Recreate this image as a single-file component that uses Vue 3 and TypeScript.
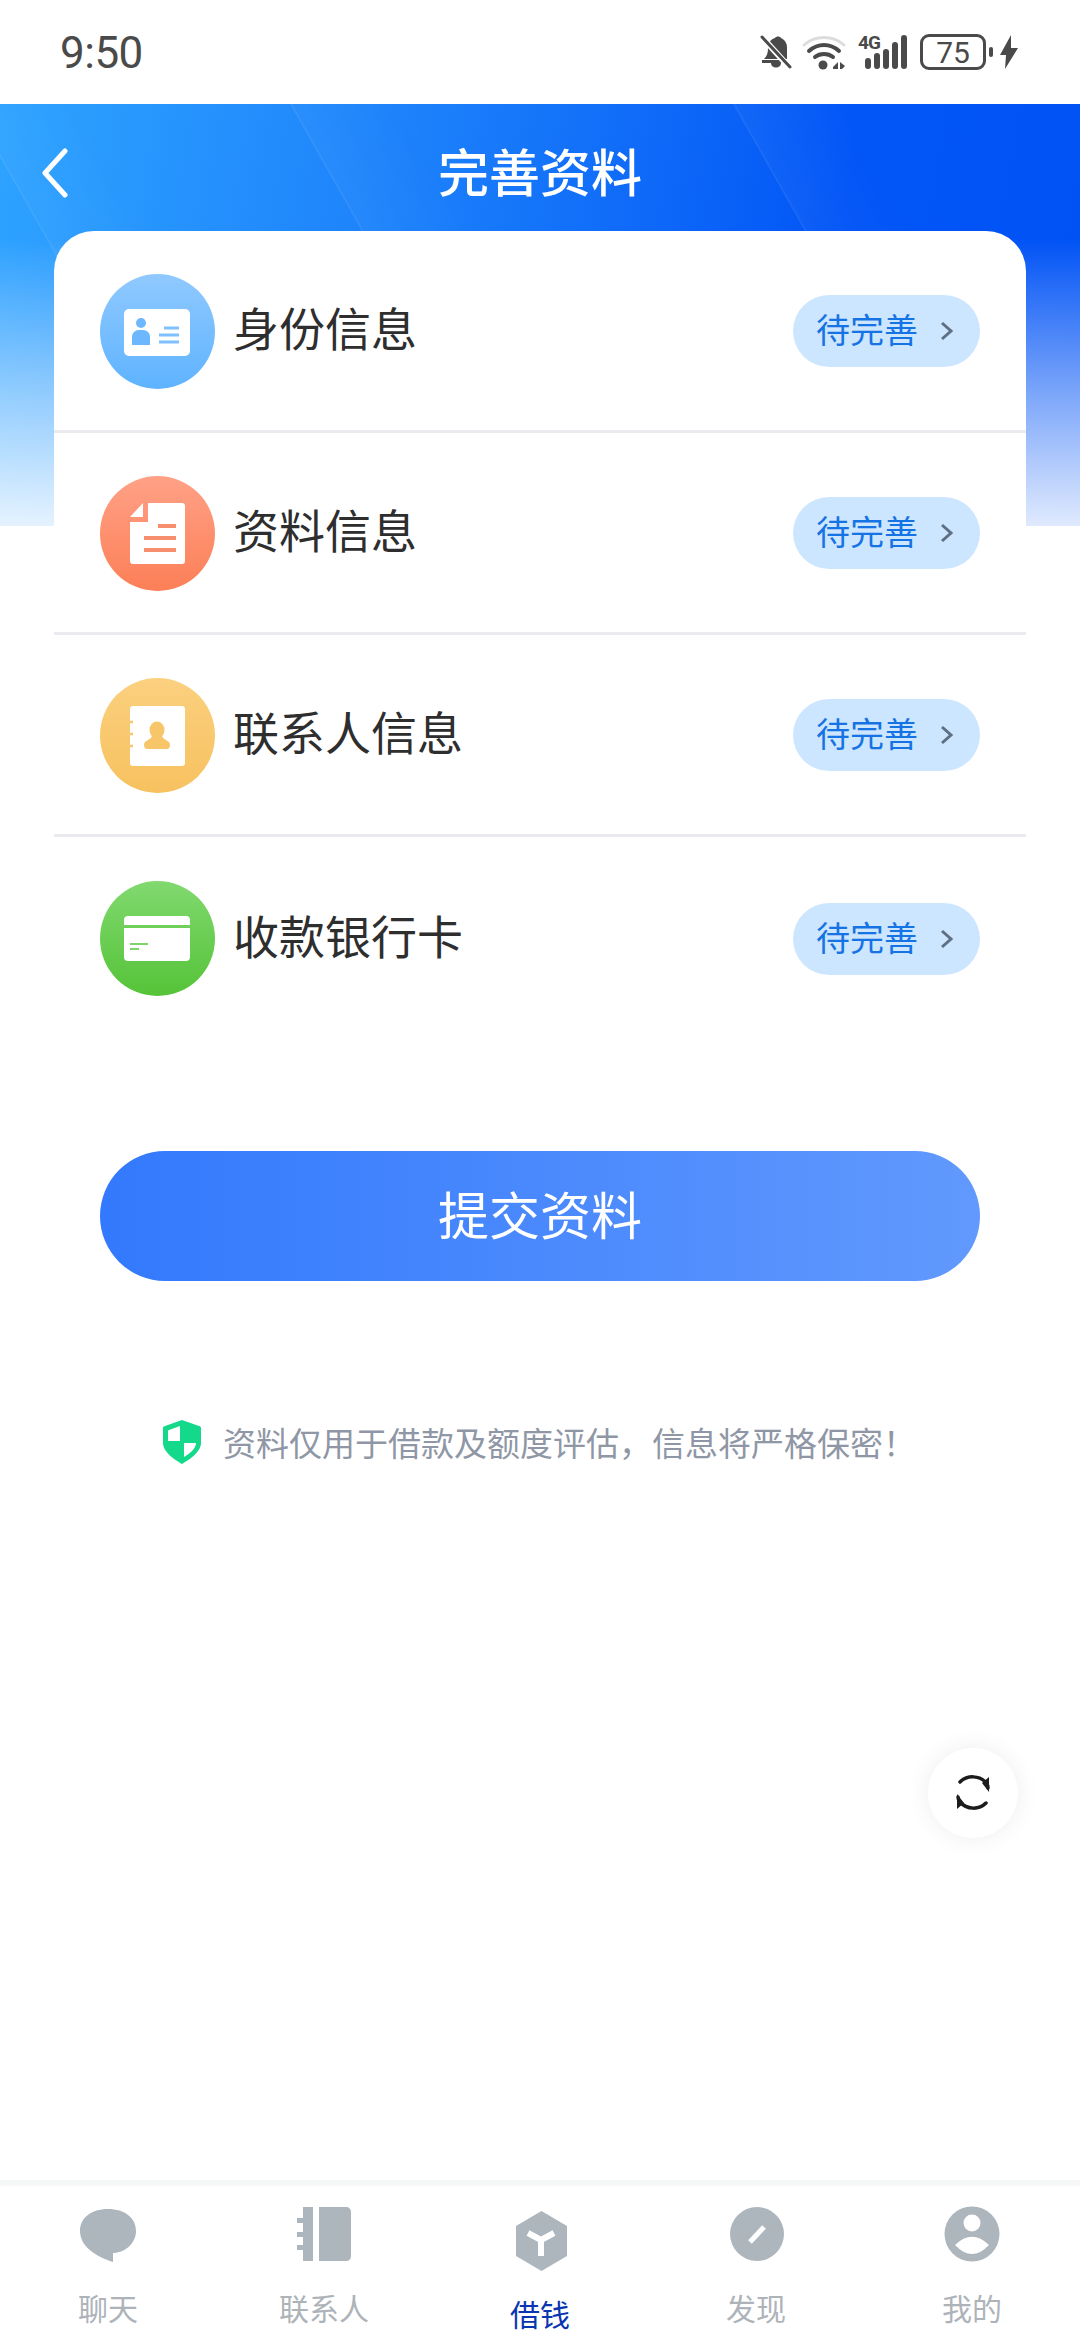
<script setup lang="ts">
interface Row { key: string; label: string }
const rows: Row[] = [
  { key: 'id', label: '身份信息' },
  { key: 'doc', label: '资料信息' },
  { key: 'contact', label: '联系人信息' },
  { key: 'bank', label: '收款银行卡' },
]
const tabs = [
  { key: 'chat', label: '聊天' },
  { key: 'book', label: '联系人' },
  { key: 'loan', label: '借钱' },
  { key: 'find', label: '发现' },
  { key: 'me', label: '我的' },
]
</script>

<template>
  <div class="page">
    <div class="status">
      <span class="time">9:50</span>
      <div class="status-icons">
        <svg width="32" height="36" viewBox="0 0 32 36" class="bell">
          <path d="M4 25c3-3 4-6 4-11 0-5 3-9 7-10 1-2 5-2 6 0 4 2 6 5 6 10v11z" fill="#4a4a4a" />
          <path d="M11 29h10c0 6-10 6-10 0zM2 26h24v3H2z" fill="#4a4a4a" />
          <path d="M1 2l29 32" stroke="#fff" stroke-width="6" />
          <path d="M2 3l28 30" stroke="#4a4a4a" stroke-width="3" stroke-linecap="round" />
        </svg>
        <svg width="46" height="36" viewBox="0 0 46 36" class="wifi">
          <path d="M3 11C14 1 32 1 43 11" stroke="#dcdcdc" stroke-width="3" fill="none" stroke-linecap="round" />
          <path d="M8 17c9-8 21-8 30 0M14 23c5-4 13-4 18 0" stroke="#4a4a4a" stroke-width="4" fill="none" stroke-linecap="round" />
          <circle cx="22" cy="31" r="4.5" fill="#4a4a4a" />
          <path d="M32 33l5-5v7h-5zM39 28v7h2l3-3z" fill="#4a4a4a" />
        </svg>
        <div class="signal">
          <span class="net">4G</span>
          <svg width="43" height="36" viewBox="0 0 43 36">
            <rect x="0" y="24" width="6" height="11" rx="3" fill="#4a4a4a" />
            <rect x="9" y="19" width="6" height="16" rx="3" fill="#4a4a4a" />
            <rect x="18" y="15" width="6" height="20" rx="3" fill="#4a4a4a" />
            <rect x="27" y="8" width="6" height="27" rx="3" fill="#4a4a4a" />
            <rect x="36" y="1" width="6" height="34" rx="3" fill="#4a4a4a" />
          </svg>
        </div>
        <div class="battery"><span>75</span></div>
        <span class="nub"></span>
        <svg width="18" height="34" viewBox="0 0 18 34" class="bolt">
          <path d="M11 0L0 20h6L5 34 18 13h-7z" fill="#4a4a4a" />
        </svg>
      </div>
    </div>

    <header class="hero">
      <span class="streak s1"></span>
      <span class="streak s2"></span>
      <span class="streak s3"></span>
      <div class="nav">
        <svg class="back" width="30" height="50" viewBox="0 0 30 50">
          <path d="M25 3L5 25l20 22" stroke="#fff" stroke-width="5" fill="none" stroke-linecap="round" stroke-linejoin="round" />
        </svg>
        <h1 class="title">完善资料</h1>
      </div>
    </header>

    <section class="card">
      <div v-for="row in rows" :key="row.key" class="row">
        <div class="badge" :class="'badge-' + row.key">
          <svg v-if="row.key === 'id'" width="115" height="115" viewBox="0 0 115 115">
            <rect x="24" y="35" width="66" height="47" rx="5" fill="#fff" />
            <circle cx="41" cy="49" r="5" fill="#6db7ff" />
            <path d="M32 71v-8c0-4 3-7 7-7h4c4 0 7 3 7 7v8z" fill="#6db7ff" />
            <path d="M64 54h15M59 61h20M59 68h20" stroke="#7fc0ff" stroke-width="3" />
          </svg>
          <svg v-else-if="row.key === 'doc'" width="115" height="115" viewBox="0 0 115 115">
            <path d="M48 27h34a3 3 0 0 1 3 3v55a3 3 0 0 1-3 3H33a3 3 0 0 1-3-3V46h18z" fill="#fff" />
            <path d="M43 27v14H30z" fill="#fff" />
            <path d="M58 50h18M44 62h32M44 74h32" stroke="#f78f6f" stroke-width="4" />
          </svg>
          <svg v-else-if="row.key === 'contact'" width="115" height="115" viewBox="0 0 115 115">
            <rect x="30" y="28" width="55" height="60" rx="3" fill="#fff" />
            <path d="M30 44h3M30 56h3M30 68h3" stroke="#f6c76f" stroke-width="2.500" />
            <ellipse cx="57" cy="52" rx="7.500" ry="8.500" fill="#f7c668" />
            <path d="M52 58h10c1 4 8 4 8 9 0 2-1 4-3 4H47c-2 0-3-2-3-4 0-5 7-5 8-9z" fill="#f7c668" />
          </svg>
          <svg v-else width="115" height="115" viewBox="0 0 115 115">
            <path d="M24 44v-5a4 4 0 0 1 4-4h58a4 4 0 0 1 4 4v5zM24 47h66v29a4 4 0 0 1-4 4H28a4 4 0 0 1-4-4z" fill="#fff" />
            <path d="M30 63h18M30 68h9" stroke="#7ed36a" stroke-width="2" />
          </svg>
        </div>
        <span class="label">{{ row.label }}</span>
        <div class="pill">
          <span class="pill-text">待完善</span>
          <svg width="14" height="20" viewBox="0 0 14 20">
            <path d="M2 2l9 8-9 8" stroke="#5f6f80" stroke-width="3" fill="none" />
          </svg>
        </div>
      </div>
    </section>

    <button class="submit" type="button"><span>提交资料</span></button>

    <p class="notice">
      <svg width="38" height="44" viewBox="0 0 38 44">
        <path d="M19 0l17 6c3 1 2 3 2 5v12c0 9-12 17-19 21C12 40 0 32 0 23V11c0-2-1-4 2-5z" fill="#15d98a" />
        <path d="M17 6v15H5v-9c0-1 0-2 1-2zM21 23h12c0 6-7 11-12 14z" fill="#fff" />
      </svg>
      <span class="notice-text">资料仅用于借款及额度评估，信息将严格保密！</span>
    </p>

    <button class="refresh" type="button" aria-label="刷新">
      <svg width="40" height="40" viewBox="0 0 40 40">
        <path d="M7 9c7-7 20-7 26 1 1 1 2 3 2 5M33 30c-7 7-19 7-26-1-1-1-2-3-2-5" stroke="#1c1c1c" stroke-width="3.5" fill="none" stroke-linecap="round" />
        <path d="M36 4v15l-7-9zM4 36V21l7 9z" fill="#1c1c1c" />
      </svg>
    </button>

    <nav class="tabbar">
      <div v-for="tab in tabs" :key="tab.key" class="tab" :class="{ active: tab.key === 'loan' }">
        <svg class="tab-icon" width="58" height="60" viewBox="0 0 58 60">
          <path v-if="tab.key === 'chat'" d="M29 3c17 0 28 9 28 22 0 13-12 22-23 22v9C22 52 1 43 1 25 1 12 12 3 29 3z" fill="#adb6bd" />
          <template v-else-if="tab.key === 'book'">
            <path d="M8 1h10v54H8zM24 1h27c3 0 5 2 5 5v44c0 3-2 5-5 5H24z" fill="#adb6bd" />
            <path d="M2 12h6v5H2zM2 26h6v5H2zM2 39h6v5H2z" fill="#adb6bd" />
          </template>
          <template v-else-if="tab.key === 'loan'">
            <path d="M30.500 5L56 20v30L30.500 65 5 50V20z" fill="#adb6bd" />
            <path d="M17 27l13 7 13-7M30 33v17" stroke="#fff" stroke-width="6" fill="none" />
          </template>
          <template v-else-if="tab.key === 'find'">
            <circle cx="30" cy="28" r="27" fill="#adb6bd" />
            <path d="M23 36l14-15" stroke="#fff" stroke-width="5" />
          </template>
          <template v-else>
            <circle cx="29" cy="28" r="27.500" fill="#adb6bd" />
            <circle cx="29" cy="17" r="8.500" fill="#fff" />
            <path d="M12 39Q29 22.500 46 39Q29 57 12 39z" fill="#fff" />
          </template>
        </svg>
        <span class="tab-label">{{ tab.label }}</span>
      </div>
    </nav>
  </div>
</template>

<style scoped>
.page {
  position: relative;
  width: 1080px;
  height: 2340px;
  display: flex;
  flex-direction: column;
  background: #fff;
  overflow: hidden;
  font-family: "Noto Sans CJK SC", "Noto Sans", sans-serif;
}
.status {
  height: 104px;
  flex: none;
  display: flex;
  align-items: center;
  justify-content: space-between;
  padding: 0 62px 0 60px;
  box-sizing: border-box;
}
.time {
  font-family: Roboto, sans-serif;
  font-size: 44px;
  letter-spacing: -0.5px;
  color: #4a4a4a;
  line-height: 1;
  position: relative;
  top: 1px;
}
.status-icons {
  display: flex;
  align-items: center;
}
.wifi { margin-left: 9px; }
.signal {
  position: relative;
  margin-left: 11px;
  width: 50px;
  height: 36px;
  display: flex;
  justify-content: flex-end;
}
.net {
  position: absolute;
  left: 0;
  top: 0;
  font-family: Roboto, sans-serif;
  font-weight: 700;
  font-size: 19px;
  line-height: 18px;
  color: #4a4a4a;
  background: #fff;
  letter-spacing: -1px;
}
.battery {
  margin-left: 12px;
  width: 66px;
  height: 36px;
  box-sizing: border-box;
  border: 3px solid #4a4a4a;
  border-radius: 9px;
  display: flex;
  align-items: center;
  justify-content: center;
  font-family: Roboto, sans-serif;
  font-size: 30px;
  color: #4a4a4a;
}
.nub {
  width: 4px;
  height: 10px;
  border-radius: 2px;
  background: #4a4a4a;
  margin-left: 3px;
}
.bolt { margin-left: 7px; }

.hero {
  position: relative;
  height: 422px;
  flex: none;
  margin-bottom: -295px;
  overflow: hidden;
  background:
    linear-gradient(180deg, rgba(255, 255, 255, 0) 32%, rgba(255, 255, 255, .5) 70%, rgba(255, 255, 255, .88) 100%),
    linear-gradient(100deg, #2ea3ff 0%, #1a7dfa 40%, #0255f6 75%, #0052f5 100%);
}
.streak {
  position: absolute;
  top: 0;
  width: 110px;
  height: 240px;
  box-sizing: border-box;
  border-left: 2px solid rgba(255, 255, 255, .09);
  background: linear-gradient(90deg, rgba(255, 255, 255, .035), rgba(255, 255, 255, 0));
  transform: skewX(29.500deg);
  transform-origin: top left;
}
.s1 { left: 290px; }
.s2 { left: 733px; }
.s3 { left: -30px; }
.nav {
  position: relative;
  height: 138px;
  display: flex;
  align-items: center;
  justify-content: center;
}
.back {
  position: absolute;
  left: 40px;
  top: 44px;
}
.title {
  margin: 0;
  font-size: 51px;
  font-weight: 500;
  color: #fff;
  line-height: 1;
  position: relative;
  top: -3px;
}
.card {
  position: relative;
  margin: 0 54px;
  background: #fff;
  border-radius: 40px 40px 0 0;
  flex: none;
}
.row {
  height: 202px;
  box-sizing: border-box;
  display: flex;
  align-items: center;
  padding: 1px 46px 0;
  border-bottom: 3px solid #e9ebee;
}
.row:last-child { border-bottom: none; }
.badge {
  width: 115px;
  height: 115px;
  border-radius: 50%;
  flex: none;
  line-height: 0;
}
.badge-id { background: linear-gradient(180deg, #90c9ff, #5eb3ff); }
.badge-doc { background: linear-gradient(180deg, #ffa186, #fc7f57); }
.badge-contact { background: linear-gradient(180deg, #fbd07f, #f7c15f); }
.badge-bank { background: linear-gradient(180deg, #81d96f, #55c338); }
.label {
  margin-left: 18px;
  font-size: 46px;
  color: #2e2e2e;
  line-height: 1;
  position: relative;
  top: -5px;
}
.pill {
  margin-left: auto;
  width: 187px;
  height: 72px;
  border-radius: 36px;
  background: #cde6ff;
  display: flex;
  align-items: center;
  justify-content: space-between;
  box-sizing: border-box;
  padding: 0 26px 0 23px;
  color: #1673e4;
  font-size: 34px;
  line-height: 1;
}
.pill-text {
  position: relative;
  top: -2px;
}
.submit {
  flex: none;
  margin: 112px 100px 0;
  height: 130px;
  border: none;
  border-radius: 65px;
  background: linear-gradient(90deg, #3379fd, #6199fd);
  color: #fff;
  font-family: inherit;
  font-size: 51px;
  font-weight: 400;
  padding: 0;
}
.submit span {
  position: relative;
  top: -3px;
}
.notice {
  flex: none;
  margin: 139px 0 0;
  display: flex;
  align-items: center;
  padding-left: 163px;
  height: 44px;
  font-size: 33px;
  color: #8f97a6;
}
.notice-text { margin-left: 22px; }
.refresh {
  position: absolute;
  left: 928px;
  top: 1748px;
  width: 90px;
  height: 90px;
  padding: 0;
  border: none;
  border-radius: 50%;
  background: #fff;
  box-shadow: 0 0 24px rgba(0, 0, 0, .07);
  display: flex;
  align-items: center;
  justify-content: center;
}
.tabbar {
  margin-top: auto;
  height: 160px;
  box-sizing: border-box;
  border-top: 6px solid #f6f8f8;
  display: grid;
  grid-template-columns: repeat(5, 216px);
  flex: none;
}
.tab {
  position: relative;
  display: flex;
  flex-direction: column;
  align-items: center;
  padding-top: 20px;
}
.tab-icon {
  flex: none;
  overflow: visible;
}
.tab-label {
  margin-top: 24px;
  font-size: 30px;
  line-height: 34px;
  color: #aeb3b9;
}
.active .tab-label {
  margin-top: 30px;
  color: #0a35b0;
}
</style>
